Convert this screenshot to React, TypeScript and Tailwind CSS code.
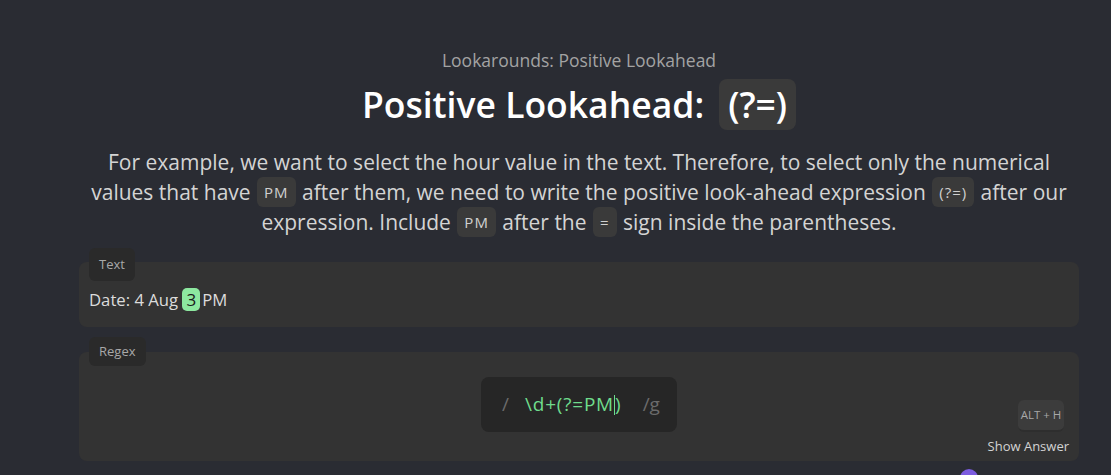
import React from "react";

const Code = ({ children }: { children: React.ReactNode }) => (
  <span className="inline-block h-[30px] leading-[30px] align-top px-[7px] mx-[1px] rounded-[6px] bg-[#3a3a3a] text-[15px] tracking-[1px] text-[#d0d0d0]">
    {children}
  </span>
);

export default function App() {
  return (
    <div
      className="relative w-[1111px] h-[475px] overflow-hidden bg-[#2a2c33] text-[#d6d6d6]"
      style={{ fontFamily: '"Open Sans", "Noto Sans", sans-serif' }}
    >
      <div className="ml-[79px] w-[1000px] flex flex-col items-center pt-[48px]">
        <div className="text-[17.5px] leading-[24px] text-[#a3a3a3]">Lookarounds: Positive Lookahead</div>
        <div className="mt-[7px] flex items-center gap-[15px]">
          <h1 className="text-[35.5px] leading-[51px] font-semibold text-white">Positive Lookahead:</h1>
          <span className="h-[51px] px-[9px] rounded-[8px] bg-[#3a3a3a] text-[35.5px] leading-[51px] font-semibold text-white">(?=)</span>
        </div>
        <p className="mt-[17px] text-[21px] leading-[30px] text-center text-[#d4d4d4]">
          For example, we want to select the hour value in the text. Therefore, to select only the numerical values that
          have <Code>PM</Code> after them, we need to write the positive look-ahead expression <Code>(?=)</Code> after our
          expression. Include <Code>PM</Code> after the <Code>=</Code> sign inside the parentheses.
        </p>

        <div className="relative mt-[25px] w-full rounded-[8px] bg-[#333333] pt-[26px] pb-[16px] px-[10px]">
          <div className="absolute left-[10px] top-[-14px] h-[33px] px-[10px] rounded-[6px] bg-[#2a2a2a] text-[13px] leading-[33px] text-[#a8a8a8]">
            Text
          </div>
          <div className="h-[23px] text-[16.7px] text-[#dcdcdc] flex items-center">
            <span>Date: 4 Aug&nbsp;</span>
            <span className="inline-flex h-[23px] px-[4px] items-center rounded-[5px] bg-[#8de8a0] text-[#1a1a1a] text-[17px]">3</span>
            <span className="ml-[2px]">PM</span>
          </div>
        </div>

        <div className="relative mt-[25px] w-full rounded-[8px] bg-[#333333] pt-[25px] pb-[29px] flex justify-center">
          <div className="absolute left-[10px] top-[-15px] h-[29px] px-[10px] rounded-[6px] bg-[#2a2a2a] text-[13px] leading-[29px] text-[#a8a8a8]">
            Regex
          </div>
          <div className="w-[196px] h-[55px] rounded-[8px] bg-[#262626] flex items-center pl-[21px] text-[19px]">
            <span className="text-[#6b6b6b]">/</span>
            <span className="ml-[16px] text-[#6fdc8c] tracking-[0.8px]">\d+(?=PM</span>
            <span className="w-[1px] h-[20px] bg-[#6fdc8c]" />
            <span className="text-[#6fdc8c]">)</span>
            <span className="ml-[22px] text-[#6b6b6b]">/g</span>
          </div>
          <div className="absolute right-[15px] top-[48px] w-[46px] h-[32px] rounded-[6px] bg-[#3c3c3c] border-b-[2px] border-[#2e2e2e] flex items-center justify-center text-[11.5px] text-[#a8a8a8]">
            ALT + H
          </div>
          <div className="absolute right-[10px] top-[85px] text-[13px] leading-[18px] text-[#d4d4d4]">Show Answer</div>
        </div>
      </div>
      <div className="absolute left-[960px] top-[469px] w-[18px] h-[18px] rounded-full bg-[#7c5ce0]" />
    </div>
  );
}
